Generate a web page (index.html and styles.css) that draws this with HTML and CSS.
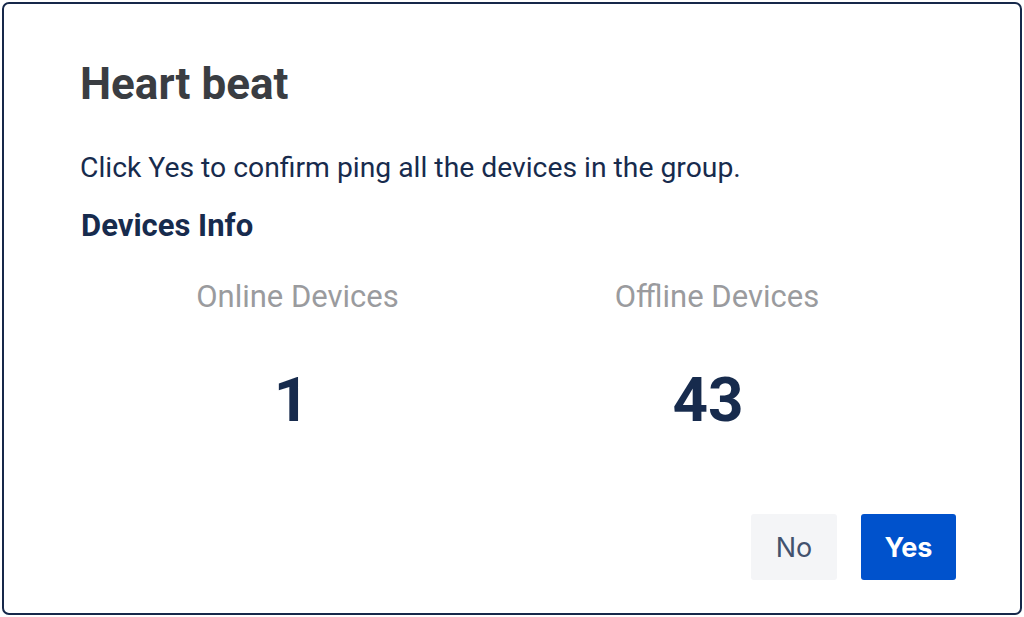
FILE: index.html
```html
<!DOCTYPE html>
<html lang="en">
<head>
  <meta charset="UTF-8">
  <meta name="viewport" content="width=device-width, initial-scale=1.0">
  <title>Heart beat</title>
  <link rel="stylesheet" href="styles.css">
</head>
<body>
  <div class="dialog">
    <h2 class="title">Heart beat</h2>
    <p class="message">Click Yes to confirm ping all the devices in the group.</p>
    <h3 class="subtitle">Devices Info</h3>

    <!-- Contadores -->
    <div class="stats">
      <div class="stat">
        <div class="stat-label">Online Devices</div>
        <div class="stat-value">1</div>
      </div>
      <div class="stat">
        <div class="stat-label offline">Offline Devices</div>
        <div class="stat-value">43</div>
      </div>
    </div>

    <div class="actions">
      <button class="no-btn">No</button>
      <button class="yes-btn">Yes</button>
    </div>
  </div>
</body>
</html>
```

FILE: styles.css
```css
body {
  margin: 0;
  padding: 2px;
  background: white;
  font-family: Roboto, "Liberation Sans", sans-serif;
}

.dialog {
  box-sizing: border-box;
  width: 1020px;
  height: 613px;
  border: 2px solid #16284a;
  border-radius: 7px;
  padding: 54px 64px 0 76px;
  color: #172b4d;
}

.title {
  margin: 0;
  font-size: 44px;
  font-weight: bold;
  color: #3a3d42;
  line-height: 52px;
}

.message {
  margin: 41px 0 0 0;
  font-size: 28.3px;
  line-height: 34px;
  color: #172b4d;
}

.subtitle {
  margin: 23px 0 0 1px;
  font-size: 31px;
  font-weight: bold;
  line-height: 36px;
}

.stats {
  display: grid;
  grid-template-columns: 423px 410px;
  margin-top: 35px;
}

.stat {
  text-align: center;
}

.stat-label {
  font-size: 31px;
  line-height: 36px;
  color: #9a9b9e;
  padding-left: 12px;
}

.stat-label.offline {
  padding-left: 18px;
}

.stat-value {
  margin-top: 54px;
  font-size: 62px;
  font-weight: bold;
  line-height: 62px;
}

.actions {
  display: flex;
  justify-content: flex-end;
  gap: 24px;
  margin-top: 83px;
}

button {
  border: none;
  border-radius: 3px;
  height: 66px;
  font-family: Inter, Roboto, sans-serif;
  font-size: 27px;
  cursor: pointer;
}

.no-btn {
  width: 86px;
  background-color: #f4f5f7;
  color: #42526e;
}

.yes-btn {
  width: 95px;
  background-color: #0052cc;
  color: white;
  font-weight: bold;
}
```
